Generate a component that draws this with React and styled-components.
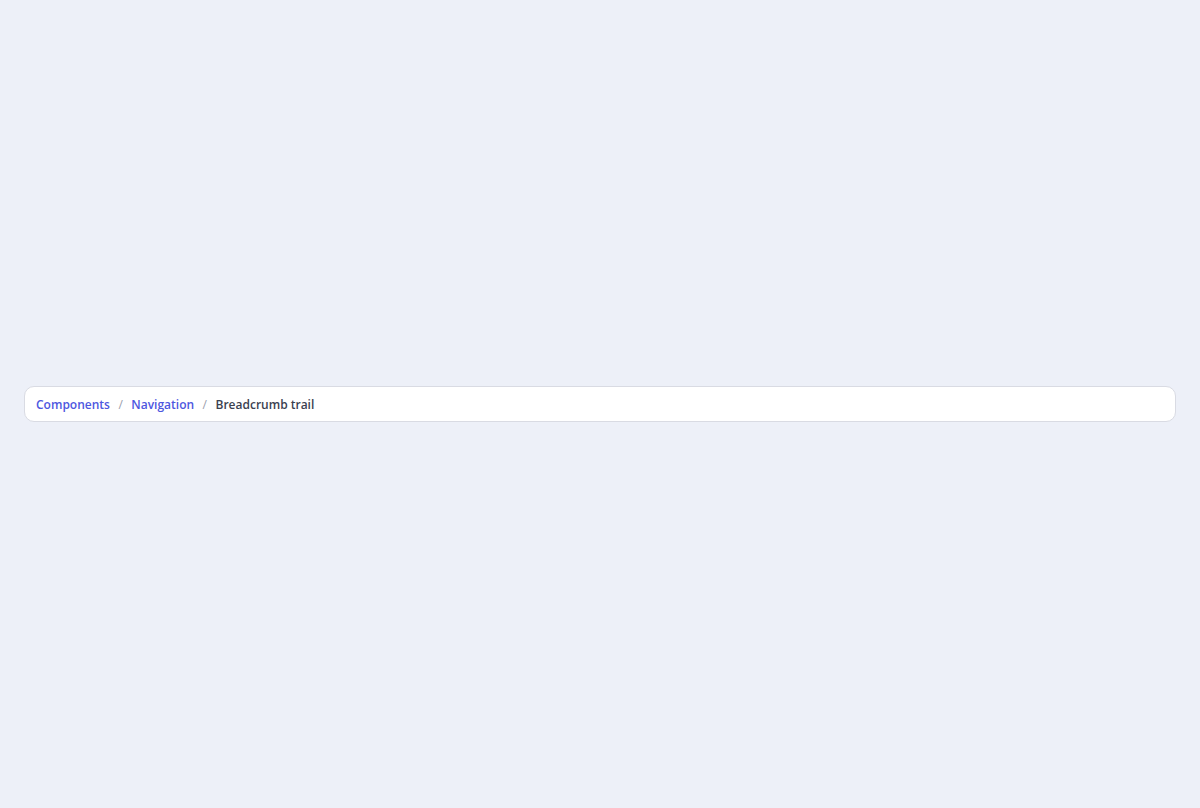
import React from "react";
import styled, { createGlobalStyle } from "styled-components";

const GlobalStyle = createGlobalStyle`
  html, body {
    margin: 0;
    height: 100%;
    background: #edf0f8;
    font-family: "Open Sans", "Noto Sans", sans-serif;
  }
  #root {
    height: 100%;
  }
`;

const Page = styled.div`
  min-height: 100%;
  box-sizing: border-box;
  padding: 0 24px;
  display: flex;
  align-items: center;
`;

const Bar = styled.nav`
  flex: 1;
  box-sizing: border-box;
  height: 36px;
  padding: 0 11px;
  display: flex;
  align-items: center;
  background: #ffffff;
  border: 1px solid #d9dbe3;
  border-radius: 10px;
`;

const Trail = styled.ol`
  list-style: none;
  margin: 0;
  padding: 0;
  display: flex;
  align-items: center;
  gap: 8.5px;
  font-size: 12px;
  font-weight: 600;
`;

const Crumb = styled.li`
  color: ${(p) => (p.$current ? "#3b4150" : "#4d57e0")};
`;

const Sep = styled.li`
  color: #9aa0ad;
  font-weight: 400;
`;

const items = ["Components", "Navigation", "Breadcrumb trail"];

export default function App() {
  return (
    <>
      <GlobalStyle />
      <Page>
        <Bar aria-label="Breadcrumb">
          <Trail>
            {items.map((item, i) => (
              <React.Fragment key={item}>
                {i > 0 && <Sep aria-hidden="true">/</Sep>}
                <Crumb $current={i === items.length - 1}>{item}</Crumb>
              </React.Fragment>
            ))}
          </Trail>
        </Bar>
      </Page>
    </>
  );
}
